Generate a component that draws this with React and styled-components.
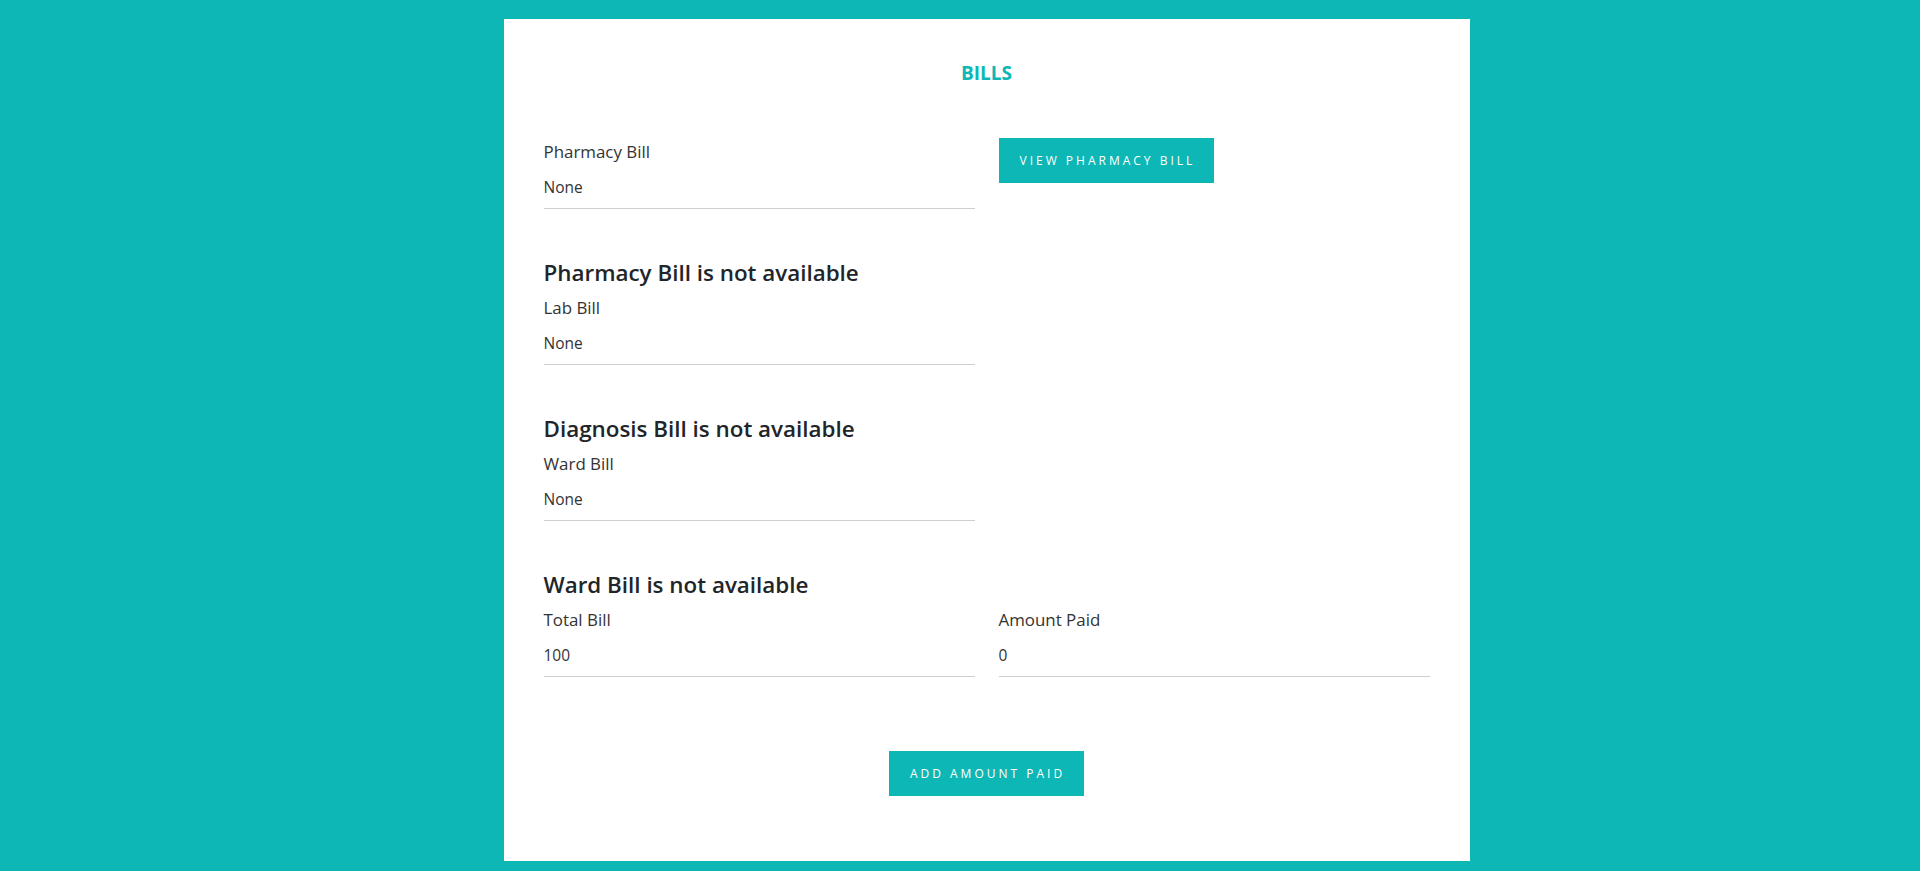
import React from 'react'
import styled, { createGlobalStyle } from 'styled-components'

const teal = '#0db7b5'

const GlobalStyle = createGlobalStyle`
  html {
    overflow-y: scroll;
  }
  body {
    margin: 0;
    background: ${teal};
    font-family: "Open Sans", "Noto Sans", Arial, sans-serif;
    color: #212529;
  }
  ::-webkit-scrollbar {
    width: 17px;
  }
  ::-webkit-scrollbar-track {
    background: #f1f1f1;
  }
  ::-webkit-scrollbar-thumb {
    background: #c1c1c1;
    border: 0 solid #f1f1f1;
    border-width: 0 2px;
  }
`

const Page = styled.div`
  min-height: 1024px;
  display: flex;
  justify-content: center;
  align-items: flex-start;
  padding: 19px 0 0 53px;
  box-sizing: border-box;
`

const Card = styled.section`
  width: 966px;
  box-sizing: border-box;
  background: #fff;
  padding: 40px 40px 65px;
`

const Title = styled.h2`
  margin: 0 0 53px;
  text-align: center;
  color: ${teal};
  font-size: 19px;
  font-weight: 700;
  line-height: 28px;
`

const Row = styled.div`
  display: grid;
  grid-template-columns: 431px 431px;
  column-gap: 24px;
  align-items: start;
`

const FieldBox = styled.div`
  width: 431px;
`

const Label = styled.label`
  display: block;
  font-size: 16.9px;
  line-height: 24px;
  color: #333;
  margin-bottom: 12px;
`

const Value = styled.div`
  font-size: 15.5px;
  line-height: 22px;
  color: #333;
  padding-bottom: 10px;
  border-bottom: 1px solid #cfcfcf;
`

const Notice = styled.h4`
  margin: 49px 0 8px;
  font-size: 22.4px;
  font-weight: 600;
  line-height: 30px;
  color: #212529;
`

const Button = styled.button`
  background: ${teal};
  color: #fff;
  border: 0;
  height: 45px;
  padding: 0 19px 0 21px;
  font-family: inherit;
  font-size: 12px;
  letter-spacing: 3px;
  text-transform: uppercase;
  cursor: pointer;
  justify-self: start;
  margin-top: ${p => p.$offset || 0}px;
`

const Footer = styled.div`
  display: flex;
  justify-content: center;
  margin-top: 74px;
`

const Field = ({ label, value }) => (
  <FieldBox>
    <Label>{label}</Label>
    <Value>{value}</Value>
  </FieldBox>
)

export default function App() {
  return (
    <>
      <GlobalStyle />
      <Page>
        <Card>
          <Title>BILLS</Title>
          <Row>
            <Field label="Pharmacy Bill" value="None" />
            <Button $offset={-2}>View Pharmacy Bill</Button>
          </Row>
          <Notice>Pharmacy Bill is not available</Notice>
          <Field label="Lab Bill" value="None" />
          <Notice>Diagnosis Bill is not available</Notice>
          <Field label="Ward Bill" value="None" />
          <Notice>Ward Bill is not available</Notice>
          <Row>
            <Field label="Total Bill" value="100" />
            <Field label="Amount Paid" value="0" />
          </Row>
          <Footer>
            <Button>Add Amount Paid</Button>
          </Footer>
        </Card>
      </Page>
    </>
  )
}
